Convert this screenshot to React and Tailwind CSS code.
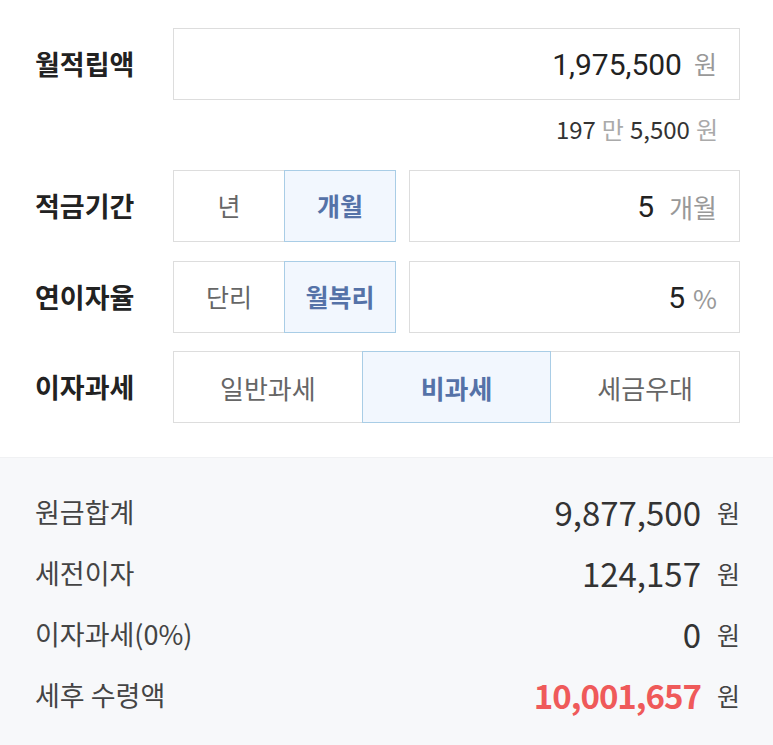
import { useState } from 'react';

const rowBox = 'h-[72px] border border-[#dddddd] bg-white flex items-center';

function Toggle({ options, value, onChange }) {
  return (
    <div className="flex">
      {options.map((opt, i) => {
        const active = opt === value;
        return (
          <button
            key={opt}
            onClick={() => onChange(opt)}
            className={
              'w-[112px] h-[72px] border text-[25px] ' +
              (i > 0 ? '-ml-px ' : '') +
              (active
                ? 'relative z-10 border-[#a9cde6] bg-[#f2f7fe] text-[#5572a8] font-bold'
                : 'border-[#dddddd] bg-white text-[#666666]')
            }
          >
            {opt}
          </button>
        );
      })}
    </div>
  );
}

function Segment({ options, value, onChange }) {
  return (
    <div className="flex flex-1">
      {options.map((opt, i) => {
        const active = opt === value;
        return (
          <button
            key={opt}
            onClick={() => onChange(opt)}
            className={
              'flex-1 h-[72px] border text-[26px] ' +
              (i > 0 ? '-ml-px ' : '') +
              (active
                ? 'relative z-10 border-[#a9cde6] bg-[#f2f7fe] text-[#5572a8] font-bold'
                : 'border-[#dddddd] bg-white text-[#666666]')
            }
          >
            {opt}
          </button>
        );
      })}
    </div>
  );
}

function ResultRow({ label, value, red }) {
  return (
    <div className="h-[61px] flex items-center justify-between">
      <span className="text-[27px] text-[#444444]">{label}</span>
      <span className="flex items-center">
        <span
          className={
            'text-[33px] ' +
            (red ? 'text-[#ef5a5a] font-bold tracking-[-1px]' : 'text-[#333333]')
          }
        >
          {value}
        </span>
        <span className="ml-[16px] text-[25px] text-[#444444]">원</span>
      </span>
    </div>
  );
}

export default function App() {
  const [period, setPeriod] = useState('개월');
  const [rateType, setRateType] = useState('월복리');
  const [tax, setTax] = useState('비과세');

  return (
    <div className="w-[773px] h-[745px] bg-white flex flex-col font-['Noto_Sans_CJK_KR','Noto_Sans',sans-serif]">
      <div className="pl-[35px] pr-[33px] pt-[28px]">
        <div className="flex items-center">
          <div className="w-[138px] text-[27px] font-bold text-[#222222]">월적립액</div>
          <div className={rowBox + ' flex-1 justify-end pr-[22px]'}>
            <span className="font-['Roboto',sans-serif] text-[30px] text-[#222222]">1,975,500</span>
            <span className="ml-[12px] text-[25px] text-[#999999]">원</span>
          </div>
        </div>

        <div className="mt-[14px] h-[30px] flex items-center justify-end pr-[22px] text-[24px] text-[#333333]">
          <span>197</span>
          <span className="ml-[6px] text-[#aaaaaa]">만</span>
          <span className="ml-[6px]">5,500</span>
          <span className="ml-[6px] text-[#aaaaaa]">원</span>
        </div>

        <div className="mt-[26px] flex items-center">
          <div className="w-[138px] text-[27px] font-bold text-[#222222]">적금기간</div>
          <Toggle options={['년', '개월']} value={period} onChange={setPeriod} />
          <div className={rowBox + ' ml-[13px] flex-1 justify-end pr-[22px]'}>
            <span className="font-['Roboto',sans-serif] text-[30px] text-[#222222]">5</span>
            <span className="ml-[15px] text-[26px] text-[#999999]">{period}</span>
          </div>
        </div>

        <div className="mt-[19px] flex items-center">
          <div className="w-[138px] text-[27px] font-bold text-[#222222]">연이자율</div>
          <Toggle options={['단리', '월복리']} value={rateType} onChange={setRateType} />
          <div className={rowBox + ' ml-[13px] flex-1 justify-end pr-[22px]'}>
            <span className="font-['Roboto',sans-serif] text-[30px] text-[#222222]">5</span>
            <span className="ml-[8px] text-[26px] text-[#999999]">%</span>
          </div>
        </div>

        <div className="mt-[18px] flex items-center">
          <div className="w-[138px] text-[27px] font-bold text-[#222222]">이자과세</div>
          <Segment options={['일반과세', '비과세', '세금우대']} value={tax} onChange={setTax} />
        </div>
      </div>

      <div className="mt-[34px] flex-1 bg-[#f7f8fa] border-t border-[#f0f1f3] pl-[35px] pr-[33px] pt-[24px]">
        <ResultRow label="원금합계" value="9,877,500" />
        <ResultRow label="세전이자" value="124,157" />
        <ResultRow label="이자과세(0%)" value="0" />
        <ResultRow label="세후 수령액" value="10,001,657" red />
      </div>
    </div>
  );
}
